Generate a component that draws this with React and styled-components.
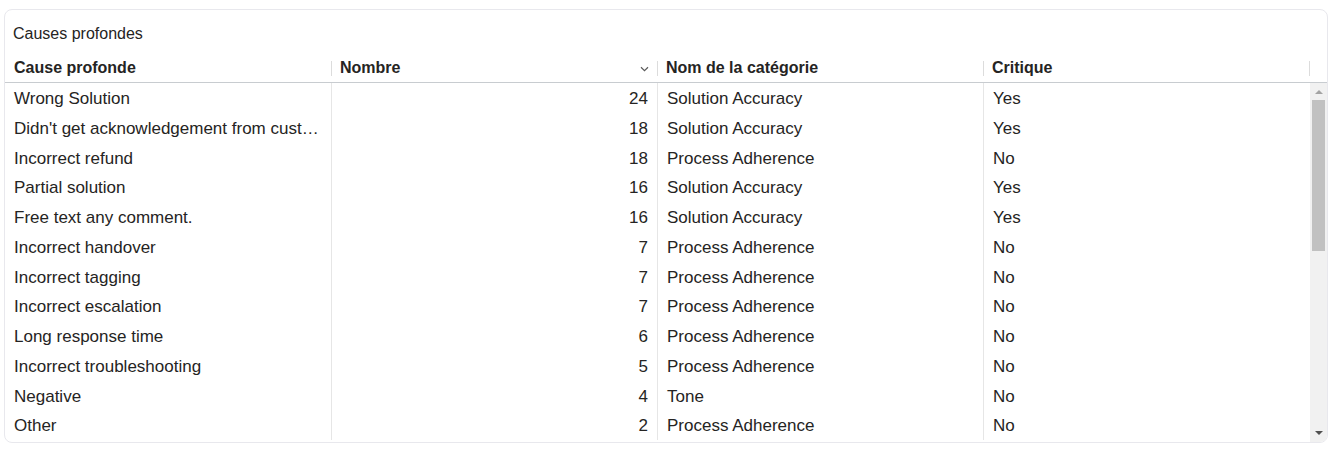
import React from "react";
import styled, { createGlobalStyle } from "styled-components";

const Global = createGlobalStyle`
  html, body { margin: 0; padding: 0; background: #ffffff; }
  body {
    padding: 9px 0 0 4px;
    font-family: "Liberation Sans", Arial, sans-serif;
    color: #252423;
  }
  * { box-sizing: border-box; }
`;

const Card = styled.section`
  width: 1324px;
  height: 434px;
  border: 1px solid #e8e8ed;
  border-radius: 8px;
  overflow: hidden;
  display: flex;
  flex-direction: column;
  background: #fff;
`;

const Title = styled.h2`
  margin: 0;
  padding: 14px 8px 0;
  font-size: 16px;
  line-height: 20px;
  font-weight: 400;
  color: #252423;
`;

const HeaderRow = styled.div`
  margin-top: 14px;
  display: grid;
  grid-template-columns: repeat(4, 326px) 18px;
  border-bottom: 1px solid #c8ccd0;
  height: 25px;
`;

const HeaderCell = styled.div`
  position: relative;
  display: flex;
  align-items: flex-start;
  padding: 0 9px;
  font-size: 16px;
  line-height: 20px;
  font-weight: 700;
  color: #252423;
  ${(p) =>
    p.$sep &&
    `
    &::before {
      content: "";
      position: absolute;
      left: 0;
      top: 3px;
      width: 1px;
      height: 15px;
      background: #dcdcdc;
    }
  `}
`;

const HeaderLabel = styled.span`
  flex: 1;
  white-space: nowrap;
`;

const SortIcon = styled.svg`
  width: 9px;
  height: 6px;
  margin-top: 8px;
  margin-right: -1px;
  flex: none;
`;

const Body = styled.div`
  flex: 1;
  display: flex;
  min-height: 0;
`;

const Rows = styled.div`
  width: 1305px;
  display: grid;
  grid-template-columns: repeat(4, 326px);
  grid-auto-rows: 29.75px;
  overflow: hidden;
`;

const Cell = styled.div`
  padding: 2px 9px 0;
  font-size: 17px;
  line-height: 27.75px;
  white-space: nowrap;
  overflow: hidden;
  text-overflow: ellipsis;
  text-align: ${(p) => (p.$num ? "right" : "left")};
  border-left: ${(p) => (p.$first ? "none" : "1px solid #e6e6e6")};
  color: #252423;
`;

const Scrollbar = styled.div`
  width: 17px;
  display: flex;
  flex-direction: column;
  background: #f1f1f1;
`;

const ScrollButton = styled.div`
  height: 17px;
  flex: none;
  display: flex;
  align-items: center;
  justify-content: center;
`;

const Arrow = styled.div`
  width: 0;
  height: 0;
  border-left: 4px solid transparent;
  border-right: 4px solid transparent;
  ${(p) =>
    p.$dir === "up"
      ? `border-bottom: 4px solid ${p.$disabled ? "#a3a3a3" : "#505050"}; margin-top: 1px;`
      : `border-top: 4px solid ${p.$disabled ? "#a3a3a3" : "#505050"}; margin-bottom: 1px;`}
`;

const Thumb = styled.div`
  height: 151px;
  margin: 0 2px;
  background: #c1c1c1;
  flex: none;
`;

const Spacer = styled.div`
  flex: 1;
`;

const data = [
  ["Wrong Solution", 24, "Solution Accuracy", "Yes"],
  ["Didn't get acknowledgement from customer", 18, "Solution Accuracy", "Yes"],
  ["Incorrect refund", 18, "Process Adherence", "No"],
  ["Partial solution", 16, "Solution Accuracy", "Yes"],
  ["Free text any comment.", 16, "Solution Accuracy", "Yes"],
  ["Incorrect handover", 7, "Process Adherence", "No"],
  ["Incorrect tagging", 7, "Process Adherence", "No"],
  ["Incorrect escalation", 7, "Process Adherence", "No"],
  ["Long response time", 6, "Process Adherence", "No"],
  ["Incorrect troubleshooting", 5, "Process Adherence", "No"],
  ["Negative", 4, "Tone", "No"],
  ["Other", 2, "Process Adherence", "No"],
];

export default function App() {
  return (
    <>
      <Global />
      <Card>
        <Title>Causes profondes</Title>
        <HeaderRow>
          <HeaderCell>
            <HeaderLabel>Cause profonde</HeaderLabel>
          </HeaderCell>
          <HeaderCell $sep>
            <HeaderLabel>Nombre</HeaderLabel>
            <SortIcon viewBox="0 0 9 6">
              <path d="M1 1.2 L4.5 4.6 L8 1.2" fill="none" stroke="#5a5a5a" strokeWidth="1.2" />
            </SortIcon>
          </HeaderCell>
          <HeaderCell $sep>
            <HeaderLabel>Nom de la catégorie</HeaderLabel>
          </HeaderCell>
          <HeaderCell $sep>
            <HeaderLabel>Critique</HeaderLabel>
          </HeaderCell>
          <HeaderCell $sep />
        </HeaderRow>
        <Body>
          <Rows>
            {data.map(([cause, n, cat, crit]) => (
              <React.Fragment key={cause}>
                <Cell $first>{cause}</Cell>
                <Cell $num>{n}</Cell>
                <Cell>{cat}</Cell>
                <Cell>{crit}</Cell>
              </React.Fragment>
            ))}
          </Rows>
          <Scrollbar>
            <ScrollButton>
              <Arrow $dir="up" $disabled />
            </ScrollButton>
            <Thumb />
            <Spacer />
            <ScrollButton>
              <Arrow $dir="down" />
            </ScrollButton>
          </Scrollbar>
        </Body>
      </Card>
    </>
  );
}
